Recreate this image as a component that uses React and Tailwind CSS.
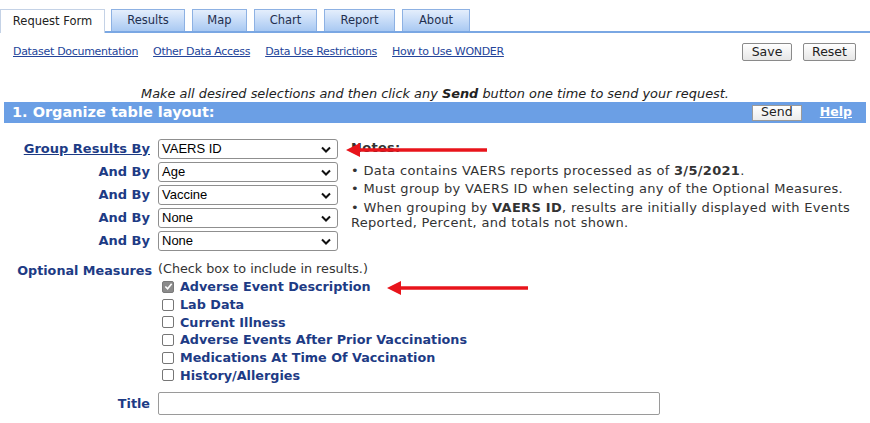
import React from 'react';

const verdana = { fontFamily: '"DejaVu Sans", Verdana, sans-serif' };

function Tab({ label, w }) {
    return (
        <div
            className={`h-[22px] ${w} mr-[7px] flex items-center justify-center border border-b-0 border-[#8db1e3] bg-gradient-to-b from-[#e4eefc] to-[#a9c9f2] text-[11.5px] text-[#1f2f4f]`}
        >
            {label}
        </div>
    );
}

function Select({ value }) {
    return (
        <div className="w-[180px] h-[20px] border border-[#8f8f8f] rounded-[3px] bg-white flex items-center justify-between pl-[3px] pr-[6px] text-[13px] text-black" style={{ fontFamily: '"Liberation Sans", Arial, sans-serif' }}>
            <span>{value}</span>
            <svg width="10" height="7" viewBox="0 0 10 7"><path d="M1 1.5 L5 5.5 L9 1.5" fill="none" stroke="#111" strokeWidth="2" /></svg>
        </div>
    );
}

function Check({ label, checked }) {
    return (
        <div className="flex items-center h-[17.7px]">
            <span className={`w-[12px] h-[12px] rounded-[2px] border flex items-center justify-center ${checked ? 'bg-[#8b8b8b] border-[#7a7a7a]' : 'bg-white border-[#767676]'}`}>
                {checked && (
                    <svg width="9" height="9" viewBox="0 0 10 10"><path d="M1.5 5 L4 7.5 L8.5 2" fill="none" stroke="#fff" strokeWidth="1.8" /></svg>
                )}
            </span>
            <span className="ml-[6px] font-bold text-[12.75px] text-[#1d3b85]">{label}</span>
        </div>
    );
}

function Arrow({ className }) {
    return (
        <svg className={className} width="142" height="16" viewBox="0 0 142 16">
            <path d="M12 6.3 H141 V9.7 H12 Z" fill="#e8141b" />
            <path d="M0 8 L14 1 L14 15 Z" fill="#e8141b" />
        </svg>
    );
}

export default function App() {
    const rows = [
        ['Group Results By', 'VAERS ID', true],
        ['And By', 'Age'],
        ['And By', 'Vaccine'],
        ['And By', 'None'],
        ['And By', 'None'],
    ];
    const measures = [
        'Adverse Event Description',
        'Lab Data',
        'Current Illness',
        'Adverse Events After Prior Vaccinations',
        'Medications At Time Of Vaccination',
        'History/Allergies',
    ];

    return (
        <div className="relative w-[870px] h-[423px] overflow-hidden bg-white text-[#333]" style={verdana}>
            {/* tabs */}
            <div className="flex items-end pt-[9px]">
                <div className="h-[24px] w-[105px] flex items-center justify-center border border-b-0 border-[#c4d2e6] bg-white text-[11.5px] text-[#222]">
                    Request Form
                </div>
                <div className="flex-1 flex items-end pl-[6px] border-b-2 border-[#7aa7e3]">
                    <Tab label="Results" w="w-[74px]" />
                    <Tab label="Map" w="w-[55px]" />
                    <Tab label="Chart" w="w-[63px]" />
                    <Tab label="Report" w="w-[71px]" />
                    <Tab label="About" w="w-[68px]" />
                </div>
            </div>

            {/* links row */}
            <div className="flex items-center justify-between pl-[13px] pr-[14px] mt-[9px] h-[20px]">
                <div className="flex gap-[15px] text-[11px] text-[#23449a] underline tracking-[-0.3px]">
                    <span>Dataset Documentation</span>
                    <span>Other Data Access</span>
                    <span>Data Use Restrictions</span>
                    <span>How to Use WONDER</span>
                </div>
                <div className="flex gap-[11px]">
                    <button className="w-[50px] h-[18px] border border-[#8a8a8a] rounded-[2px] bg-gradient-to-b from-white to-[#e6e6e6] text-[12.5px] text-[#222] leading-none">Save</button>
                    <button className="w-[53px] h-[18px] border border-[#8a8a8a] rounded-[2px] bg-gradient-to-b from-white to-[#e6e6e6] text-[12.5px] text-[#222] leading-none">Reset</button>
                </div>
            </div>

            {/* instruction */}
            <div className="mt-[24px] text-center italic text-[12.9px] text-[#222] leading-[15px]">
                Make all desired selections and then click any <b>Send</b> button one time to send your request.
            </div>

            {/* header bar */}
            <div className="mx-[4px] h-[21px] mt-[1px] bg-[#6b9fe5] flex items-center justify-between pl-[8px] pr-[14px]">
                <span className="text-white font-bold text-[14.5px]">1. Organize table layout:</span>
                <div className="flex items-center gap-[18px]">
                    <button className="w-[50px] h-[16px] border border-[#9a9a9a] bg-gradient-to-b from-white to-[#ececec] text-[12.5px] text-[#222] leading-none">Send</button>
                    <span className="text-white font-bold text-[12.5px] underline">Help</span>
                </div>
            </div>

            {/* group by + notes */}
            <div className="flex mt-[16px]">
                <div className="flex flex-col gap-[3px]">
                    {rows.map(([label, value, link], i) => (
                        <div key={i} className="flex items-center">
                            <span className={`w-[150px] text-right font-bold text-[13px] text-[#1d3b85] ${link ? 'underline' : ''}`}>{label}</span>
                            <div className="ml-[8px]"><Select value={value} /></div>
                        </div>
                    ))}
                </div>
                <div className="ml-[13px] w-[505px] text-[13px] tracking-[0.3px] text-[#333] leading-[15px]">
                    <div className="font-bold mt-[1px]">Notes:</div>
                    <div className="mt-[8px]">• Data contains VAERS reports processed as of <b>3/5/2021</b>.</div>
                    <div className="mt-[3px]">• Must group by VAERS ID when selecting any of the Optional Measures.</div>
                    <div className="mt-[4px]">• When grouping by <b>VAERS ID</b>, results are initially displayed with Events Reported, Percent, and totals not shown.</div>
                </div>
            </div>

            {/* optional measures */}
            <div className="flex mt-[10px]">
                <span className="w-[152px] text-right font-bold text-[12.75px] text-[#1d3b85]">Optional Measures</span>
                <div className="ml-[6px]">
                    <div className="text-[12.75px] text-[#333] leading-[16px]">(Check box to include in results.)</div>
                    <div className="ml-[4px] mt-[1px]">
                        {measures.map((m, i) => (
                            <Check key={m} label={m} checked={i === 0} />
                        ))}
                    </div>
                </div>
            </div>

            {/* title */}
            <div className="flex items-center mt-[8px]">
                <span className="w-[150px] text-right font-bold text-[12.75px] text-[#1d3b85]">Title</span>
                <div className="ml-[8px] w-[502px] h-[23px] border border-[#9a9a9a] rounded-[2px] bg-white" />
            </div>

            {/* annotation arrows */}
            <Arrow className="absolute left-[346px] top-[142px]" />
            <Arrow className="absolute left-[387px] top-[280px]" />
        </div>
    );
}
